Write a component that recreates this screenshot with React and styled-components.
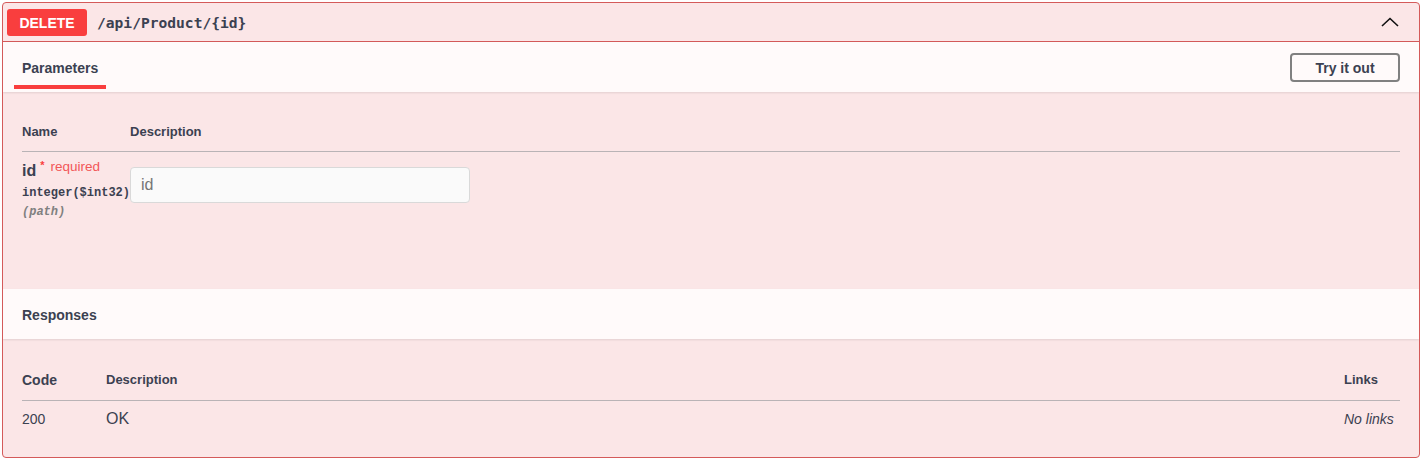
import React from 'react';
import styled, { createGlobalStyle } from 'styled-components';

const GlobalStyle = createGlobalStyle`
  body {
    margin: 0;
    background: #fff;
    font-family: "Liberation Sans", Arial, sans-serif;
    color: #3b4151;
  }
`;

const Page = styled.div`
  padding: 2px 2px 0;
`;

const OpBlock = styled.div`
  border: 1px solid #d45a5a;
  border-radius: 4px;
  background: #fbe6e7;
  overflow: hidden;
`;

const Summary = styled.div`
  display: flex;
  align-items: center;
  height: 38px;
  padding: 0 19px 0 4px;
  border-bottom: 1px solid #d45a5a;
`;

const Method = styled.span`
  min-width: 80px;
  height: 27px;
  margin-top: 1px;
  display: flex;
  align-items: center;
  justify-content: center;
  background: #f93e3e;
  color: #fff;
  border-radius: 3px;
  font-size: 14px;
  font-weight: 700;
`;

const Path = styled.span`
  flex: 1;
  margin-left: 10px;
  font-family: "DejaVu Sans Mono", "Liberation Mono", monospace;
  font-size: 14.6px;
  font-weight: 700;
  color: #3b4151;
`;

const Arrow = styled.svg`
  width: 20px;
  height: 20px;
`;

const SectionHeader = styled.div`
  display: flex;
  align-items: stretch;
  justify-content: space-between;
  height: 50px;
  padding: 0 19px 0 11px;
  background: #fffafa;
  box-shadow: 0 1px 2px rgba(0, 0, 0, 0.1);
  ${({ $plain }) => $plain && 'align-items: center; padding: 0 19px;'}
`;

const Tab = styled.div`
  display: flex;
  align-items: center;
  padding: 8px 8px 0;
  margin-bottom: 3px;
  border-bottom: 4px solid #f93e3e;
  font-size: 14px;
  font-weight: 700;
`;

const SectionTitle = styled.h4`
  margin: 2px 0 0;
  font-size: 14px;
  font-weight: 700;
`;

const TryButton = styled.button`
  align-self: center;
  width: 110px;
  height: 29px;
  margin-top: 1px;
  border: 2px solid #808080;
  border-radius: 4px;
  background: transparent;
  font-family: "Liberation Sans", Arial, sans-serif;
  font-size: 14px;
  font-weight: 700;
  color: #3b4151;
`;

const ParamsBody = styled.div`
  min-height: 197px;
  padding: 21px 19px 0;
  box-sizing: border-box;
`;

const Table = styled.table`
  width: 100%;
  border-collapse: collapse;
`;

const HeadCell = styled.td`
  padding: ${({ $pad }) => $pad || '12px 0 12px'};
  line-height: 14px;
  font-size: ${({ $size }) => $size || '13px'};
  font-weight: 700;
  color: #3b4151;
  border-bottom: 1px solid #b9b3b6;
  width: ${({ $w }) => $w || 'auto'};
  text-align: left;
`;

const NameCell = styled.td`
  width: 105px;
  padding: 9px 0 0;
  vertical-align: top;
`;

const ParamName = styled.div`
  font-size: 16px;
  font-weight: 700;
  line-height: 20px;
  white-space: nowrap;

  span {
    position: relative;
    top: -7px;
    margin-left: 4px;
    font-size: 11px;
    color: #f93e3e;
  }

  em {
    position: relative;
    top: -5px;
    margin-left: 6px;
    font-style: normal;
    font-weight: 400;
    font-size: 13.5px;
    color: #f25757;
  }
`;

const ParamType = styled.div`
  margin-top: 3px;
  font-family: "Liberation Mono", monospace;
  font-size: 12px;
  font-weight: 700;
  line-height: 16px;
  white-space: nowrap;
`;

const ParamIn = styled.div`
  margin-top: 4px;
  font-family: "Liberation Mono", monospace;
  font-size: 12px;
  font-style: italic;
  font-weight: 700;
  color: #808080;
`;

const DescCell = styled.td`
  padding: 10px 0;
  vertical-align: top;
`;

const Input = styled.input`
  display: block;
  width: 340px;
  height: 36px;
  margin: 5px 0;
  padding: 8px 10px;
  box-sizing: border-box;
  border: 1px solid #d9d9d9;
  border-radius: 4px;
  background: #fafafa;
  font-family: "Liberation Sans", Arial, sans-serif;
  font-size: 16px;
  color: #3b4151;
  outline: none;

  ::placeholder {
    color: #8a8a8a;
  }
`;

const ResponsesBody = styled.div`
  padding: 21px 19px 20px;
`;

const Cell = styled.td`
  padding: 9px 0;
  line-height: 18px;
  font-size: ${({ $size }) => $size || '14px'};
  font-style: ${({ $italic }) => ($italic ? 'italic' : 'normal')};
  color: #3b4151;
`;

const App = () => (
  <Page>
    <GlobalStyle />
    <OpBlock>
      <Summary>
        <Method>DELETE</Method>
        <Path>/api/Product/{'{id}'}</Path>
        <Arrow viewBox="0 0 20 20">
          <path d="M2 14 L10 6.5 L18 14" fill="none" stroke="#111" strokeWidth="1.6" />
        </Arrow>
      </Summary>

      <SectionHeader>
        <Tab>Parameters</Tab>
        <TryButton>Try it out</TryButton>
      </SectionHeader>

      <ParamsBody>
        <Table>
          <thead>
            <tr>
              <HeadCell $w="105px">Name</HeadCell>
              <HeadCell>Description</HeadCell>
            </tr>
          </thead>
          <tbody>
            <tr>
              <NameCell>
                <ParamName>
                  id<span>*</span>
                  <em>required</em>
                </ParamName>
                <ParamType>integer($int32)</ParamType>
                <ParamIn>(path)</ParamIn>
              </NameCell>
              <DescCell>
                <Input placeholder="id" />
              </DescCell>
            </tr>
          </tbody>
        </Table>
      </ParamsBody>

      <SectionHeader $plain>
        <SectionTitle>Responses</SectionTitle>
      </SectionHeader>

      <ResponsesBody>
        <Table>
          <thead>
            <tr>
              <HeadCell $w="84px" $size="14px" $pad="13px 0">Code</HeadCell>
              <HeadCell $pad="13px 0">Description</HeadCell>
              <HeadCell $w="56px" $pad="13px 0">Links</HeadCell>
            </tr>
          </thead>
          <tbody>
            <tr>
              <Cell>200</Cell>
              <Cell $size="16px">OK</Cell>
              <Cell $italic>No links</Cell>
            </tr>
          </tbody>
        </Table>
      </ResponsesBody>
    </OpBlock>
  </Page>
);

export default App;
